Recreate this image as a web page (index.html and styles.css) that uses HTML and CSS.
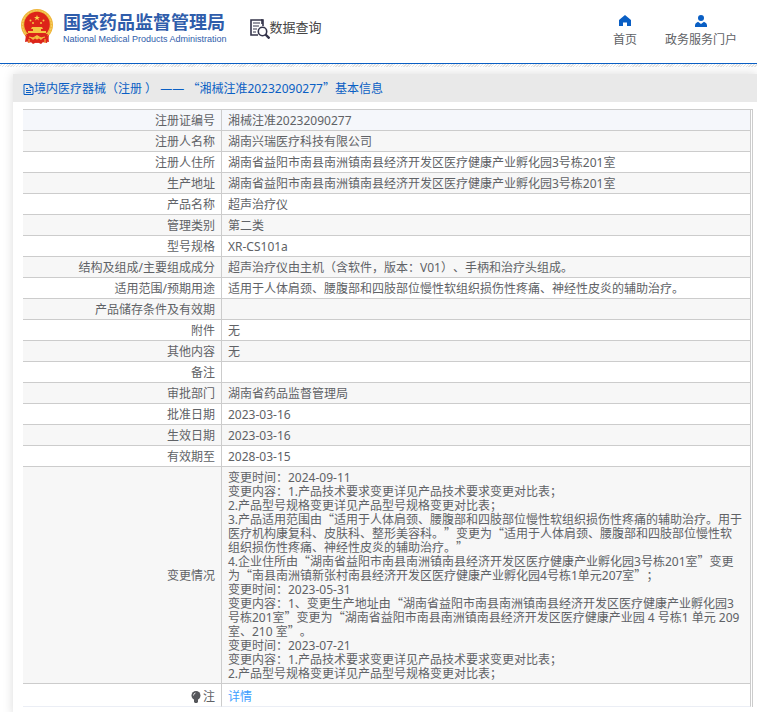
FILE: index.html
```html
<!DOCTYPE html>
<html lang="zh-CN">
<head>
  <meta charset="UTF-8">
  <meta name="viewport" content="width=device-width, initial-scale=1.0">
  <title>国家药品监督管理局数据查询</title>
  <link rel="stylesheet" href="styles.css">
</head>
<body>
  <header class="header">
    <div class="logo">
      <svg class="emblem" viewBox="0 0 32 36" width="32" height="36">
        <path d="M5 26 L4 33 L9 32 L12 35 L16 33 L20 35 L23 32 L28 33 L27 26z" fill="#d9241c"/>
        <circle cx="16" cy="16" r="16" fill="#efb53a"/>
        <circle cx="16" cy="16" r="14.4" fill="none" stroke="#f8d468" stroke-width="1" stroke-dasharray="2 1"/>
        <circle cx="16" cy="15.5" r="12.8" fill="#dd2419"/>
        <path d="M16 6l.8 2h2.200l-1.800 1.300.7 2.100-1.900-1.300-1.900 1.300.7-2.100L13 8h2.200z" fill="#f9d64a"/>
        <g fill="#f5c544">
          <circle cx="9.500" cy="11.500" r="1"/>
          <circle cx="12" cy="14" r="1"/>
          <circle cx="20" cy="14" r="1"/>
          <circle cx="22.500" cy="11.500" r="1"/>
          <path d="M11 18h10l1 2H10zM12 20h8v2h-8zM7 22h18v2H7z"/>
        </g>
        <path d="M5 25h22l-2 4H7z" fill="#d9241c"/>
        <path d="M4 26l5 2 3 3 4-3 4 3 3-3 5-2-1 5-1 3-5-1-5 1-5-1-4 1-1-4z" fill="#dd2419"/>
        <path d="M8 28l4 1 4-2 4 2 4-1" fill="none" stroke="#f3bf3f" stroke-width="1.200"/>
        <circle cx="16" cy="28.500" r="2" fill="#f3bf3f"/>
        <path d="M8 30v4M24 30v4" stroke="#f3bf3f" stroke-width="1"/>
      </svg>
      <div class="logo-text">
        <div class="logo-cn">国家药品监督管理局</div>
        <div class="logo-en">National Medical Products Administration</div>
      </div>
    </div>
    <div class="search-title">
      <svg viewBox="0 0 20 20" width="20" height="20" fill="none" stroke="#34344a" stroke-width="1.600">
        <path d="M12 5V1H1v15h7"/>
        <path d="M3 4h7M3 7h6M3 10h4M3 13h3" stroke-width="1.200"/>
        <path d="M13 7V1h-2"/>
        <circle cx="12.500" cy="12.500" r="4.200" fill="#fff"/>
        <path d="M15.500 15.500l4 4" stroke-width="2.400"/>
      </svg>
      <span>数据查询</span>
    </div>
    <nav class="nav">
      <a href="#">
        <svg viewBox="0 0 12 12" width="12" height="12"><path d="M6 0L0 5v6h4V7.500h4V11h4V5z" fill="#0a5fc4"/></svg>
        <span>首页</span>
      </a>
      <a href="#">
        <svg viewBox="0 0 12 12" width="12" height="12"><circle cx="6" cy="3" r="3" fill="#0a5fc4"/><path d="M0 12V10q0-2 3-3.200l3 2.200 3-2.200q3 1.200 3 3.200v2z" fill="#0a5fc4"/></svg>
        <span>政务服务门户</span>
      </a>
    </nav>
  </header>
  <div class="texture"></div>

  <main class="panel">
    <h1 class="panel-title">
      <svg viewBox="0 0 10 12" width="11" height="12" fill="none" stroke="#0a5fc4"><path d="M.5 1.500h6l3 3v7h-9zM6.500 1.500v3h3M2.500 5.500h2M2.500 7.500h5M2.500 9.500h5"/></svg>
      <span>境内医疗器械（注册 ） —— <i>“</i>湘械注准20232090277<i>”</i>基本信息</span>
    </h1>
    <div class="table-wrap">
      <table class="info">
        <tbody>
          <tr class="current"><th scope="row">注册证编号</th><td>湘械注准20232090277</td></tr>
          <tr><th scope="row">注册人名称</th><td>湖南兴瑞医疗科技有限公司</td></tr>
          <tr><th scope="row">注册人住所</th><td>湖南省益阳市南县南洲镇南县经济开发区医疗健康产业孵化园3号栋201室</td></tr>
          <tr><th scope="row">生产地址</th><td>湖南省益阳市南县南洲镇南县经济开发区医疗健康产业孵化园3号栋201室</td></tr>
          <tr><th scope="row">产品名称</th><td>超声治疗仪</td></tr>
          <tr><th scope="row">管理类别</th><td>第二类</td></tr>
          <tr><th scope="row">型号规格</th><td>XR-CS101a</td></tr>
          <tr><th scope="row">结构及组成/主要组成成分</th><td>超声治疗仪由主机（含软件，版本：V01）、手柄和治疗头组成。</td></tr>
          <tr><th scope="row">适用范围/预期用途</th><td>适用于人体肩颈、腰腹部和四肢部位慢性软组织损伤性疼痛、神经性皮炎的辅助治疗。</td></tr>
          <tr><th scope="row">产品储存条件及有效期</th><td></td></tr>
          <tr><th scope="row">附件</th><td>无</td></tr>
          <tr><th scope="row">其他内容</th><td>无</td></tr>
          <tr><th scope="row">备注</th><td></td></tr>
          <tr><th scope="row">审批部门</th><td>湖南省药品监督管理局</td></tr>
          <tr><th scope="row">批准日期</th><td>2023-03-16</td></tr>
          <tr><th scope="row">生效日期</th><td>2023-03-16</td></tr>
          <tr><th scope="row">有效期至</th><td>2028-03-15</td></tr>
          <tr>
            <th scope="row">变更情况</th>
            <td>变更时间：2024-09-11<br>
              变更内容：1.产品技术要求变更详见产品技术要求变更对比表；<br>
              2.产品型号规格变更详见产品型号规格变更对比表；<br>
              3.产品适用范围由<i>“</i>适用于人体肩颈、腰腹部和四肢部位慢性软组织损伤性疼痛的辅助治疗。用于医疗机构康复科、皮肤科、整形美容科。<i>”</i>变更为<i>“</i>适用于人体肩颈、腰腹部和四肢部位慢性软组织损伤性疼痛、神经性皮炎的辅助治疗。<i>”</i><br>
              4.企业住所由<i>“</i>湖南省益阳市南县南洲镇南县经济开发区医疗健康产业孵化园3号栋201室<i>”</i>变更为<i>“</i>南县南洲镇新张村南县经济开发区医疗健康产业孵化园4号栋1单元207室<i>”</i>；<br>
              变更时间：2023-05-31<br>
              变更内容：1、变更生产地址由<i>“</i>湖南省益阳市南县南洲镇南县经济开发区医疗健康产业孵化园3号栋201室<i>”</i>变更为<i>“</i>湖南省益阳市南县南洲镇南县经济开发区医疗健康产业园 4 号栋1 单元 209 室、210 室<i>”</i>。<br>
              变更时间：2023-07-21<br>
              变更内容：1.产品技术要求变更详见产品技术要求变更对比表；<br>
              2.产品型号规格变更详见产品型号规格变更对比表；</td>
          </tr>
          <tr class="note">
            <th scope="row"><svg class="bulb" viewBox="0 0 10 12" width="10" height="12"><circle cx="5" cy="4.500" r="4.500" fill="#55575b"/><path d="M3 8h4v3l-1 1H4l-1-1z" fill="#55575b"/><path d="M2.500 4.500q0-2 2-2.500" fill="none" stroke="#fff" stroke-width=".8"/></svg>注</th>
            <td><a href="#">详情</a></td>
          </tr>
        </tbody>
      </table>
    </div>
  </main>
</body>
</html>
```

FILE: styles.css
```css
* {
  box-sizing: border-box;
}

body {
  margin: 0;
  background: #fff;
  color: #606266;
  font-family: "Noto Sans", "Noto Sans CJK SC", sans-serif;
  font-size: 12px;
  line-height: 14px;
  text-spacing-trim: space-all;
}

a {
  color: inherit;
  text-decoration: none;
}

/* 全角引号 */
i {
  font-family: "Noto Sans CJK SC", sans-serif;
  font-style: normal;
  line-height: 1px;
}

.header {
  display: flex;
  align-items: flex-start;
  height: 64px;
  padding: 9px 20px 0 21px;
  border-bottom: 1px solid #0a5fc4;
}

.logo {
  display: flex;
  gap: 10px;
}

.logo-text {
  padding-top: 3px;
  color: #2f5dab;
  white-space: nowrap;
}

.logo-cn {
  font-size: 18px;
  font-weight: bold;
  line-height: 20px;
}

.logo-en {
  font-family: "Liberation Sans", Arial, sans-serif;
  font-size: 9px;
  line-height: 14px;
}

.search-title {
  display: flex;
  align-items: flex-start;
  margin-left: 23px;
  padding-top: 10px;
  color: #444;
  font-size: 13px;
  line-height: 16px;
}

.nav {
  display: flex;
  gap: 28px;
  margin-left: auto;
  padding-top: 6px;
}

.nav a {
  display: flex;
  flex-direction: column;
  align-items: center;
  gap: 6px;
}

.texture {
  height: 3px;
  background: repeating-linear-gradient(135deg, #fff 0 1px, #e2e2e2 1px 2px);
}

.panel {
  margin: 7px 0 0 13px;
  box-shadow: 0 0 10px rgba(0, 0, 0, 0.15);
}

.panel-title {
  display: flex;
  align-items: center;
  height: 28px;
  margin: 0;
  padding: 2px 0 0 10px;
  background: #e9e9e9;
  color: #0a5fc4;
  font-size: 12px;
  font-weight: normal;
}

.table-wrap {
  margin: 7px 4px 0 10px;
  padding-bottom: 8px;
}

.info {
  width: 100%;
  border-collapse: separate;
  border-spacing: 0;
  border-top: 1px solid #ccc;
  border-right: 1px solid #ccc;
  padding-right: 1px;
}

.info th,
.info td {
  padding: 4px 6px 2px;
  border-right: 1px solid #ccc;
  border-bottom: 1px solid #ccc;
  height: 21px;
  font-weight: normal;
}

.info th {
  width: 199px;
  text-align: right;
}

.info tr:nth-child(even) {
  background: #f7f7f7;
}

.info .current {
  background: #f5f7fb;
}

.info .note th,
.info .note td {
  padding: 6px 6px 2px;
  height: 23px;
  border-bottom-color: #ebeef5;
}

.note a {
  color: #409eff;
}

.bulb {
  margin-right: 2px;
  vertical-align: -2px;
}
```
